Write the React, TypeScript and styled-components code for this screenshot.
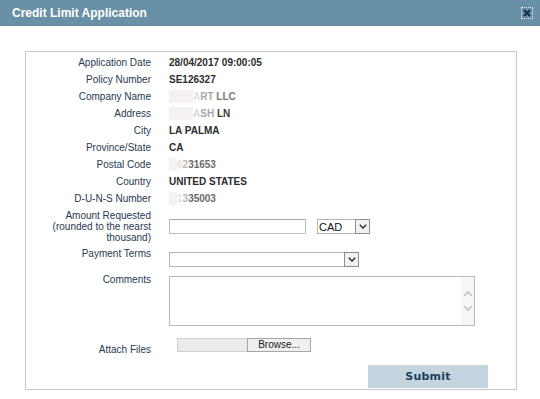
import React from "react";
import styled, { createGlobalStyle } from "styled-components";

const Global = createGlobalStyle`
  html, body { margin: 0; padding: 0; background: #ffffff; }
  body { font-family: "Liberation Sans", Arial, sans-serif; }
  * { box-sizing: border-box; }
`;

const Page = styled.div`
  width: 540px;
  height: 399px;
  background: #ffffff;
  overflow: hidden;
`;

const TitleBar = styled.div`
  height: 26px;
  background: #6890a6;
  display: flex;
  align-items: center;
  justify-content: space-between;
  padding: 0 7px 0 12px;
`;

const Title = styled.h1`
  margin: 0;
  font-family: "Liberation Sans", Arial, sans-serif;
  font-size: 12px;
  font-weight: bold;
  color: #ffffff;
  line-height: 14px;
`;

const CloseButton = styled.button`
  width: 12px;
  height: 12px;
  padding: 0;
  margin-top: -1px;
  border: 1px dotted #e8eef2;
  background: transparent;
  display: flex;
  align-items: center;
  justify-content: center;
`;

const Panel = styled.div`
  margin: 25px 0 0 25px;
  width: 492px;
  border: 1px solid #c8c8c8;
  padding: 1px 0 1px 0;
  font-size: 10px;
`;

const Row = styled.div<{ $h?: number; $mt?: number; $align?: string }>`
  display: grid;
  grid-template-columns: 125px 1fr;
  column-gap: 18px;
  align-items: ${(p) => p.$align || "start"};
  min-height: ${(p) => (p.$h ? `${p.$h}px` : "auto")};
  margin-top: ${(p) => p.$mt || 0}px;
`;

const Label = styled.div<{ $lh?: number; $mt?: number }>`
  text-align: right;
  color: #1f3a52;
  font-size: 10px;
  line-height: ${(p) => p.$lh || 17}px;
  margin-top: ${(p) => p.$mt || 0}px;
`;

const Value = styled.div`
  color: #2c2c2c;
  font-weight: bold;
  font-size: 10px;
  line-height: 17px;
  white-space: pre;
`;

const Redact = styled.span<{ $w: number }>`
  display: inline-block;
  width: ${(p) => p.$w}px;
  height: 13px;
  vertical-align: middle;
  margin-top: -2px;
  background: #f5f1f1;
`;

const Tone = styled.span<{ $c: string }>`
  color: ${(p) => p.$c};
`;

const Controls = styled.div<{ $mt?: number }>`
  display: flex;
  align-items: center;
  gap: 11px;
  margin-top: ${(p) => p.$mt || 0}px;
`;

const TextInput = styled.input`
  width: 137px;
  height: 15px;
  border: 1px solid #bdbdbd;
  border-top-color: #a8a8a8;
  padding: 0 2px;
  font-size: 10px;
  font-family: inherit;
  outline: none;
`;

const SelectBox = styled.div<{ $w: number }>`
  width: ${(p) => p.$w}px;
  height: 15px;
  border: 1px solid #b4b4b4;
  display: flex;
  align-items: stretch;
  background: #ffffff;
`;

const SelectField = styled.select`
  flex: 1;
  min-width: 0;
  appearance: none;
  -webkit-appearance: none;
  border: none;
  background: transparent;
  padding: 0 1px;
  font-family: "Liberation Sans", Arial, sans-serif;
  font-size: 11px;
  color: #111;
  outline: none;
`;

const ArrowBox = styled.span`
  width: 15px;
  border: 1px solid #8e8e8e;
  background: #f1f1f1;
  display: flex;
  align-items: center;
  justify-content: center;
  margin: -1px -1px -1px 0;
`;

const TextAreaBox = styled.div`
  width: 306px;
  height: 50px;
  border: 1px solid #b9b9b9;
  display: flex;
  margin-top: 2px;
`;

const CommentField = styled.textarea`
  flex: 1;
  border: none;
  resize: none;
  outline: none;
  font-family: inherit;
  font-size: 10px;
`;

const ScrollTrack = styled.div`
  width: 13px;
  background: #f6f6f6;
  display: flex;
  flex-direction: column;
  align-items: center;
  justify-content: center;
  gap: 8px;
`;

const FileInput = styled.div`
  display: flex;
  height: 14px;
  margin-left: 8px;
`;

const FileName = styled.div`
  width: 70px;
  background: #ebebeb;
  border: 1px solid #cfcfcf;
  border-right: none;
`;

const BrowseButton = styled.button`
  width: 64px;
  height: 14px;
  padding: 0;
  border: 1px solid #a6a6a6;
  background: #efefef;
  font-family: "Liberation Sans", Arial, sans-serif;
  font-size: 10px;
  line-height: 12px;
  color: #222;
`;

const Footer = styled.div`
  display: flex;
  justify-content: flex-end;
  padding-right: 28px;
  margin-top: 9px;
`;

const SubmitButton = styled.button`
  width: 120px;
  height: 23px;
  border: none;
  background: #c4d5df;
  color: #1c3e5b;
  font-family: "DejaVu Sans", Verdana, sans-serif;
  font-weight: bold;
  font-size: 11px;
  letter-spacing: 0.2px;
  padding: 0;
`;

const Chevron = ({ up, color = "#222", w = 8 }: { up?: boolean; color?: string; w?: number }) => (
  <svg width={w} height={w * 0.6} viewBox="0 0 10 6">
    <path
      d={up ? "M1 5 L5 1 L9 5" : "M1 1 L5 5 L9 1"}
      fill="none"
      stroke={color}
      strokeWidth="1.6"
    />
  </svg>
);

const info: { label: string; value: React.ReactNode }[] = [
  { label: "Application Date", value: "28/04/2017 09:00:05" },
  { label: "Policy Number", value: "SE126327" },
  {
    label: "Company Name",
    value: (
      <>
        <Redact $w={24} />
        <Tone $c="#e2dede">A</Tone>
        <Tone $c="#a9a9a9">RT </Tone>
        <Tone $c="#7a7a7a">LLC</Tone>
      </>
    ),
  },
  {
    label: "Address",
    value: (
      <>
        <Redact $w={24} />
        <Tone $c="#d9d6d6">A</Tone>
        <Tone $c="#a8a8a8">SH </Tone>
        <Tone $c="#3a3a3a">LN</Tone>
      </>
    ),
  },
  { label: "City", value: "LA PALMA" },
  { label: "Province/State", value: "CA" },
  {
    label: "Postal Code",
    value: (
      <>
        <Redact $w={8} />
        <Tone $c="#e6e2e2">6</Tone>
        <Tone $c="#b8b8b8">2</Tone>
        <Tone $c="#6a6a6a">31653</Tone>
      </>
    ),
  },
  { label: "Country", value: "UNITED STATES" },
  {
    label: "D-U-N-S Number",
    value: (
      <>
        <Redact $w={8} />
        <Tone $c="#e6e2e2">1</Tone>
        <Tone $c="#b8b8b8">3</Tone>
        <Tone $c="#6a6a6a">35003</Tone>
      </>
    ),
  },
];

export default function App() {
  return (
    <Page>
      <Global />
      <TitleBar>
        <Title>Credit Limit Application</Title>
        <CloseButton aria-label="close">
          <svg width="8" height="8" viewBox="0 0 8 8">
            <path d="M1 1 L7 7 M7 1 L1 7" stroke="#14304a" strokeWidth="2.2" />
          </svg>
        </CloseButton>
      </TitleBar>
      <Panel>
        {info.map((r, i) => (
          <Row key={r.label} $h={17} $mt={i === 0 ? 1 : 0}>
            <Label>{r.label}</Label>
            <Value>{r.value}</Value>
          </Row>
        ))}
        <Row $mt={3} $align="center">
          <Label $lh={11}>
            Amount Requested
            <br />
            (rounded to the nearst
            <br />
            thousand)
          </Label>
          <Controls>
            <TextInput type="text" />
            <SelectBox $w={53}>
              <SelectField defaultValue="CAD">
                <option>CAD</option>
              </SelectField>
              <ArrowBox>
                <Chevron />
              </ArrowBox>
            </SelectBox>
          </Controls>
        </Row>
        <Row $mt={5}>
          <Label $lh={12}>Payment Terms</Label>
          <Controls $mt={4}>
            <SelectBox $w={190}>
              <SelectField defaultValue="">
                <option value=""></option>
              </SelectField>
              <ArrowBox>
                <Chevron />
              </ArrowBox>
            </SelectBox>
          </Controls>
        </Row>
        <Row $mt={7}>
          <Label $lh={12}>Comments</Label>
          <TextAreaBox>
            <CommentField />
            <ScrollTrack>
              <Chevron up color="#c4c4c4" w={10} />
              <Chevron color="#c4c4c4" w={10} />
            </ScrollTrack>
          </TextAreaBox>
        </Row>
        <Row $mt={12}>
          <Label $lh={12} $mt={6}>
            Attach Files
          </Label>
          <FileInput>
            <FileName />
            <BrowseButton>Browse...</BrowseButton>
          </FileInput>
        </Row>
        <Footer>
          <SubmitButton>Submit</SubmitButton>
        </Footer>
      </Panel>
    </Page>
  );
}
